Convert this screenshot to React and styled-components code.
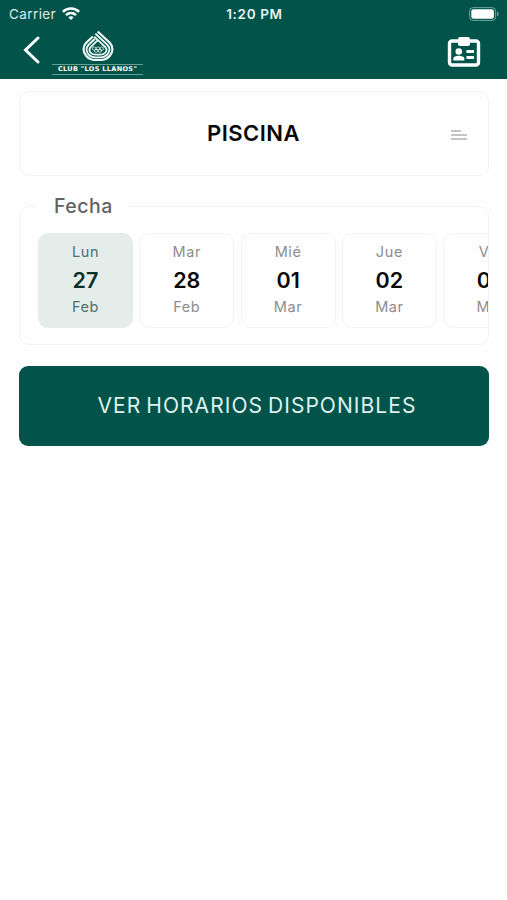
import React from 'react'
import styled, { createGlobalStyle } from 'styled-components'

const days = [
    { name: 'Lun', number: '27', month: 'Feb' },
    { name: 'Mar', number: '28', month: 'Feb' },
    { name: 'Mié', number: '01', month: 'Mar' },
    { name: 'Jue', number: '02', month: 'Mar' },
    { name: 'Vie', number: '03', month: 'Mar' },
]

function WifiIcon() {
    return (
        <svg width="18" height="14" viewBox="0 0 18 14" fill="none" stroke="#fff" strokeWidth="2.5">
            <path d="M0.9 4.9C5.4 0.4 12.6 0.4 17.1 4.9" />
            <path d="M4 8.1C6.8 5.4 11.2 5.4 14 8.1" />
            <path d="M6.3 10.2C7.8 8.8 10.2 8.8 11.7 10.2L9 13Z" fill="#fff" stroke="none" />
        </svg>
    )
}

function BatteryIcon() {
    return (
        <svg width="31" height="14" viewBox="0 0 31 14">
            <rect x="0.6" y="0.6" width="26" height="12.8" rx="3.6" fill="none" stroke="#fff" strokeOpacity="0.45" strokeWidth="1" />
            <rect x="2.3" y="2.3" width="22.6" height="9.4" rx="2.2" fill="#fff" />
            <path d="M28.1 4.7C30.2 5.4 30.2 8.6 28.1 9.3Z" fill="#fff" fillOpacity="0.5" />
        </svg>
    )
}

function BackIcon() {
    return (
        <svg width="18" height="28" viewBox="0 0 18 28" fill="none" stroke="#fff" strokeWidth="3">
            <path d="M15 2L2.5 14L15 26" strokeLinecap="round" strokeLinejoin="miter" />
        </svg>
    )
}

function BadgeIcon() {
    return (
        <svg width="34" height="32" viewBox="0 0 34 32">
            <rect x="2.5" y="5" width="29" height="24" rx="2.5" fill="none" stroke="#fff" strokeWidth="3.4" />
            <rect x="11" y="1" width="12" height="9" rx="2" fill="#fff" />
            <circle cx="11.8" cy="15.5" r="3.3" fill="#fff" />
            <path d="M6.3 24.6V22.6C6.3 20.6 9.2 19.7 11.8 19.7S17.3 20.6 17.3 22.6V24.6Z" fill="#fff" />
            <rect x="19.3" y="14" width="7.8" height="3.1" rx="1" fill="#fff" />
            <rect x="19.3" y="19.9" width="7.8" height="3.1" rx="1" fill="#fff" />
        </svg>
    )
}

function ClubMark() {
    return (
        <svg width="32" height="31" viewBox="1.6 0.2 28.8 29" preserveAspectRatio="none" fill="none" stroke="#eef8f6">
            <path d="M15.7 1.5L26.6 12.2C29.9 15.6 29.7 21 26.5 24.5C24.4 27 21.3 28.3 18 28.3H14C10.7 28.3 7.6 27 5.5 24.5C2.3 21 2.1 15.6 5.4 12.2L11.4 6.3" strokeWidth="2" />
            <path d="M13.6 3.6L24.7 14.3C26.7 16.6 26.8 20.2 24.5 23C22.8 24.9 20.5 25.8 18 25.8H14C11.5 25.8 9.2 24.9 7.5 23C5.2 20.2 5.3 16.6 7.3 14.3L13.2 8.4" strokeWidth="1.8" />
            <path d="M12.6 6.3L22.6 16.2C24.1 18 23.9 20 22.5 21.5C21.3 22.8 19.8 23.3 18 23.3H14C12.2 23.3 10.7 22.8 9.5 21.5C8.1 20 7.9 18 9.4 16.2L15.6 10" strokeWidth="1.6" />
            <g strokeWidth="0.7">
                <circle cx="12.6" cy="17.6" r="1.6" />
                <circle cx="16" cy="17.6" r="1.6" />
                <circle cx="19.4" cy="17.6" r="1.6" />
                <circle cx="14.3" cy="19.6" r="1.5" />
                <circle cx="17.7" cy="19.6" r="1.5" />
            </g>
        </svg>
    )
}

function App() {
    return (
        <Screen>
            <GlobalStyle />
            <Header>
                <StatusBar>
                    <Carrier>
                        Carrier
                        <WifiIcon />
                    </Carrier>
                    <Clock>1:20 PM</Clock>
                    <Battery>
                        <BatteryIcon />
                    </Battery>
                </StatusBar>
                <NavBar>
                    <IconButton aria-label="Volver">
                        <BackIcon />
                    </IconButton>
                    <Logo>
                        <ClubMark />
                        <LogoText>CLUB "LOS LLANOS"</LogoText>
                    </Logo>
                    <BadgeButton aria-label="Carnet">
                        <BadgeIcon />
                    </BadgeButton>
                </NavBar>
            </Header>
            <Content>
                <ActivityCard>
                    <ActivityName>PISCINA</ActivityName>
                    <MenuLines>
                        <Line $width={10} />
                        <Line $width={16} />
                        <Line $width={16} />
                    </MenuLines>
                </ActivityCard>
                <DateField>
                    <DateLegend>Fecha</DateLegend>
                    <DayList>
                        {days.map((day, i) => (
                            <Day key={day.number} $selected={i === 0}>
                                <DayText>{day.name}</DayText>
                                <DayNumber>{day.number}</DayNumber>
                                <DayText>{day.month}</DayText>
                            </Day>
                        ))}
                    </DayList>
                </DateField>
                <SubmitButton>VER HORARIOS DISPONIBLES</SubmitButton>
            </Content>
        </Screen>
    )
}

export default App


const GlobalStyle = createGlobalStyle`
    * {
        box-sizing: border-box;
    }
    body {
        margin: 0;
        background: #fefefe;
        font-family: Inter, "Liberation Sans", sans-serif;
    }
    svg {
        display: block;
        flex-shrink: 0;
    }
`

const Screen = styled.div`
    min-height: 100vh;
    overflow: hidden;
`

const Header = styled.header`
    height: 79px;
    background: #02544b;
    color: white;
`

const StatusBar = styled.div`
    height: 27px;
    padding: 0 7px 0 9px;
    display: grid;
    grid-template-columns: 1fr auto 1fr;
    align-items: center;
`

const Carrier = styled.div`
    display: flex;
    align-items: center;
    gap: 6px;
    font-size: 13.5px;
    letter-spacing: 0.4px;
    color: #dcebe8;
`

const Clock = styled.div`
    font-size: 13.5px;
    font-weight: 600;
    letter-spacing: 0.65px;
    color: #e6f3f1;
`

const Battery = styled.div`
    justify-self: end;
`

const NavBar = styled.nav`
    height: 52px;
    padding: 0 26px 0 23px;
    display: flex;
    align-items: flex-start;
`

const IconButton = styled.button`
    border: none;
    background: none;
    padding: 9px 0 0;
`

const BadgeButton = styled(IconButton)`
    margin-left: auto;
    padding-top: 9px;
`

const Logo = styled.div`
    width: 91px;
    margin-left: 11px;
    padding-top: 3px;
    display: flex;
    flex-direction: column;
    align-items: center;
`

const LogoText = styled.div`
    width: 100%;
    height: 11px;
    margin-top: 3px;
    border-top: 1px solid #65a097;
    border-bottom: 1px solid #65a097;
    font-family: "DejaVu Sans", sans-serif;
    font-size: 6.5px;
    line-height: 9px;
    font-weight: 700;
    letter-spacing: 0.35px;
    text-align: center;
    white-space: nowrap;
`

const Content = styled.main`
    padding: 12px 18px 0 19px;
    display: flex;
    flex-direction: column;
`

const ActivityCard = styled.section`
    height: 85px;
    padding: 0 21px;
    border: 1.5px solid #f3f3f3;
    border-radius: 10px;
    display: grid;
    grid-template-columns: 1fr auto 1fr;
    align-items: center;
`

const ActivityName = styled.h1`
    grid-column: 2;
    margin: 0;
    padding: 0 1px 2px 0;
    font-size: 22px;
    font-weight: 600;
    letter-spacing: 0.5px;
    color: #080808;
`

const MenuLines = styled.div`
    justify-self: end;
    padding-top: 2px;
    display: flex;
    flex-direction: column;
    gap: 2px;
`

const Line = styled.span`
    width: ${props => props.$width}px;
    height: 2px;
    background: #c4c4c4;
`

const DateField = styled.fieldset`
    min-width: 0;
    height: 152px;
    margin: 17px 0 0;
    padding: 0 0 0 18px;
    border: 1.5px solid #f3f3f3;
    border-radius: 10px;
`

const DateLegend = styled.legend`
    height: 26px;
    width: 91px;
    margin-left: -1px;
    padding: 0 0 0 17px;
    font-size: 19.5px;
    line-height: 27px;
    font-weight: 500;
    letter-spacing: 0.5px;
    color: #626262;
`

const DayList = styled.div`
    margin-top: 14px;
    display: flex;
    gap: 6.3px;
    overflow: hidden;
`

const Day = styled.div`
    flex: 0 0 95px;
    height: 95px;
    padding-top: 9px;
    border: 1.5px solid ${props => props.$selected ? '#e5edeb' : '#f3f3f3'};
    border-radius: 10px;
    background: ${props => props.$selected ? '#e5edeb' : '#fefefe'};
    color: ${props => props.$selected ? '#4b716b' : '#8d8d8d'};
    text-align: center;

    strong {
        color: ${props => props.$selected ? '#08302b' : '#080808'};
    }
`

const DayText = styled.div`
    font-size: 14.5px;
    line-height: 18px;
    letter-spacing: 0.6px;
`

const DayNumber = styled.strong`
    display: block;
    padding-top: 2px;
    font-size: 21.5px;
    line-height: 35px;
    font-weight: 600;
`

const SubmitButton = styled.button`
    height: 80px;
    margin-top: 21px;
    padding: 0 0 1px 6px;
    border: none;
    border-radius: 9px;
    background: #02544b;
    color: #dff1ef;
    font-family: inherit;
    font-size: 21px;
    font-weight: 400;
    letter-spacing: 1.05px;
    word-spacing: -2px;
`
